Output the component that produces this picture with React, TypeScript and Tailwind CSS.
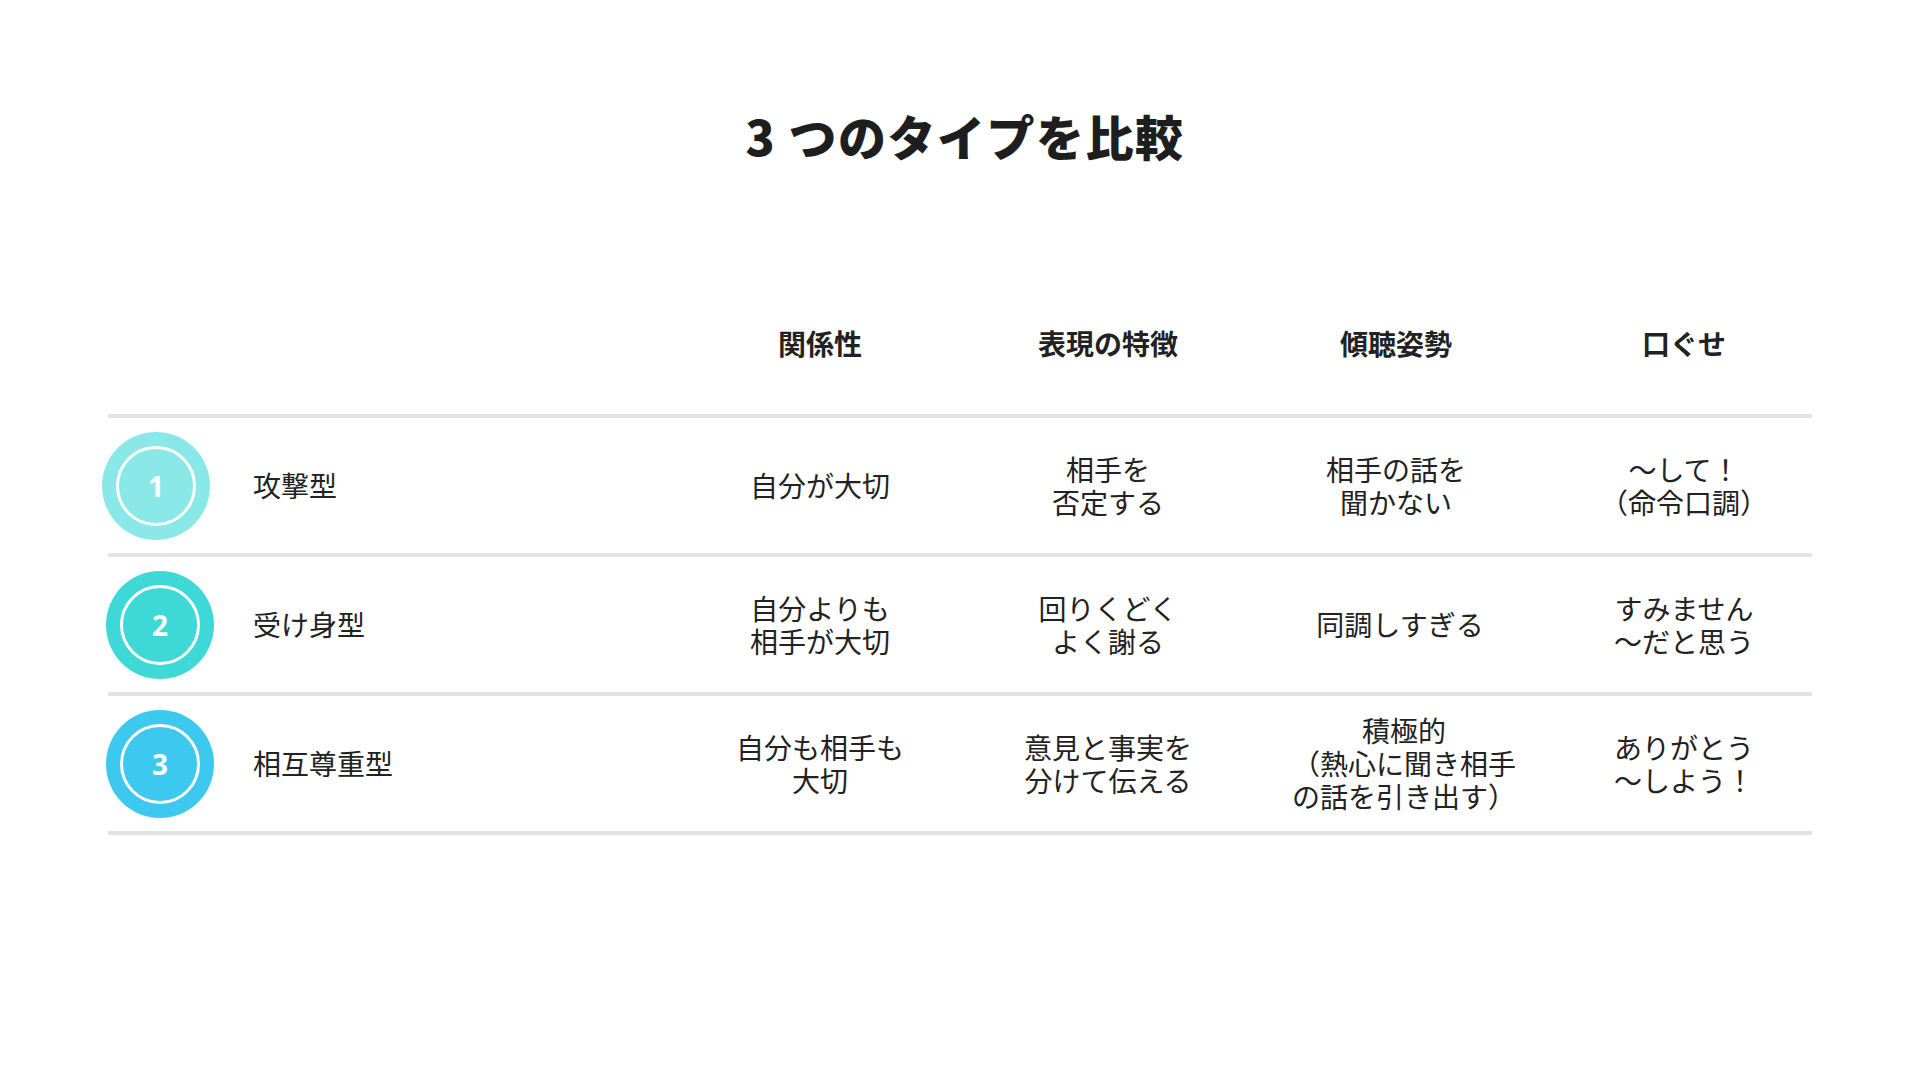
import { ReactNode } from "react";

interface IRow {
  num: string;
  color: string;
  shift: string;
  label: string;
  cells: ReactNode[];
}

const HEADERS = ["関係性", "表現の特徴", "傾聴姿勢", "口ぐせ"];

const ROWS: IRow[] = [
  {
    num: "1",
    color: "bg-[#8ae8e8]",
    shift: "-ml-[6px]",
    label: "攻撃型",
    cells: [
      "自分が大切",
      <>相手を<br />否定する</>,
      <>相手の話を<br />聞かない</>,
      <>～して！<br />（命令口調）</>,
    ],
  },
  {
    num: "2",
    color: "bg-[#3ed9d6]",
    shift: "-ml-[2px]",
    label: "受け身型",
    cells: [
      <>自分よりも<br />相手が大切</>,
      <>回りくどく<br />よく謝る</>,
      <span className="pl-[8px]">同調しすぎる</span>,
      <>すみません<br />～だと思う</>,
    ],
  },
  {
    num: "3",
    color: "bg-[#3cc8ef]",
    shift: "-ml-[2px]",
    label: "相互尊重型",
    cells: [
      <>自分も相手も<br />大切</>,
      <>意見と事実を<br />分けて伝える</>,
      <div className="pl-[16px]">積極的<br />（熱心に聞き相手<br />の話を引き出す）</div>,
      <>ありがとう<br />～しよう！</>,
    ],
  },
];

// Numbered badge: filled disc with a thin white ring inside
const Badge = ({ num, color }: { num: string; color: string }) => (
  <div className={`${color} flex h-[108px] w-[108px] items-center justify-center rounded-full`}>
    <div className="flex h-[80px] w-[80px] items-center justify-center rounded-full border-[3px] border-white">
      <span className="font-['Open_Sans',sans-serif] text-[28px] font-bold leading-none text-white">
        {num}
      </span>
    </div>
  </div>
);

const App = () => {
  return (
    <div className="flex h-[1080px] w-full flex-col bg-white font-['Noto_Sans_CJK_JP','Noto_Sans',sans-serif] text-[#222222]">
      <h1 className="pt-[99px] pl-[10px] text-center text-[48px] font-black leading-[72px] tracking-[1.5px] text-[#1e1e1e]">
        3 つのタイプを比較
      </h1>

      <div className="mt-[101px] px-[108px]">
        {/* header row */}
        <div className="grid h-[142px] grid-cols-[1fr_256px_256px_256px_256px] items-center gap-x-8">
          <div></div>
          {HEADERS.map((h) => (
            <div key={h} className="text-center text-[28px] font-bold leading-[33px]">
              {h}
            </div>
          ))}
        </div>
        <div className="h-[4px] bg-[#e3e3e3]"></div>

        {ROWS.map((row) => (
          <div key={row.num}>
            <div className="grid h-[135px] grid-cols-[1fr_256px_256px_256px_256px] items-center gap-x-8">
              <div className="flex items-center">
                <div className="w-[145px]">
                  <div className={row.shift}>
                    <Badge num={row.num} color={row.color} />
                  </div>
                </div>
                <div className="text-[28px] leading-[33px]">{row.label}</div>
              </div>
              {row.cells.map((c, i) => (
                <div key={i} className="text-center text-[28px] leading-[33px] whitespace-nowrap">
                  {c}
                </div>
              ))}
            </div>
            <div className="h-[4px] bg-[#e3e3e3]"></div>
          </div>
        ))}
      </div>
    </div>
  );
};

export default App;
